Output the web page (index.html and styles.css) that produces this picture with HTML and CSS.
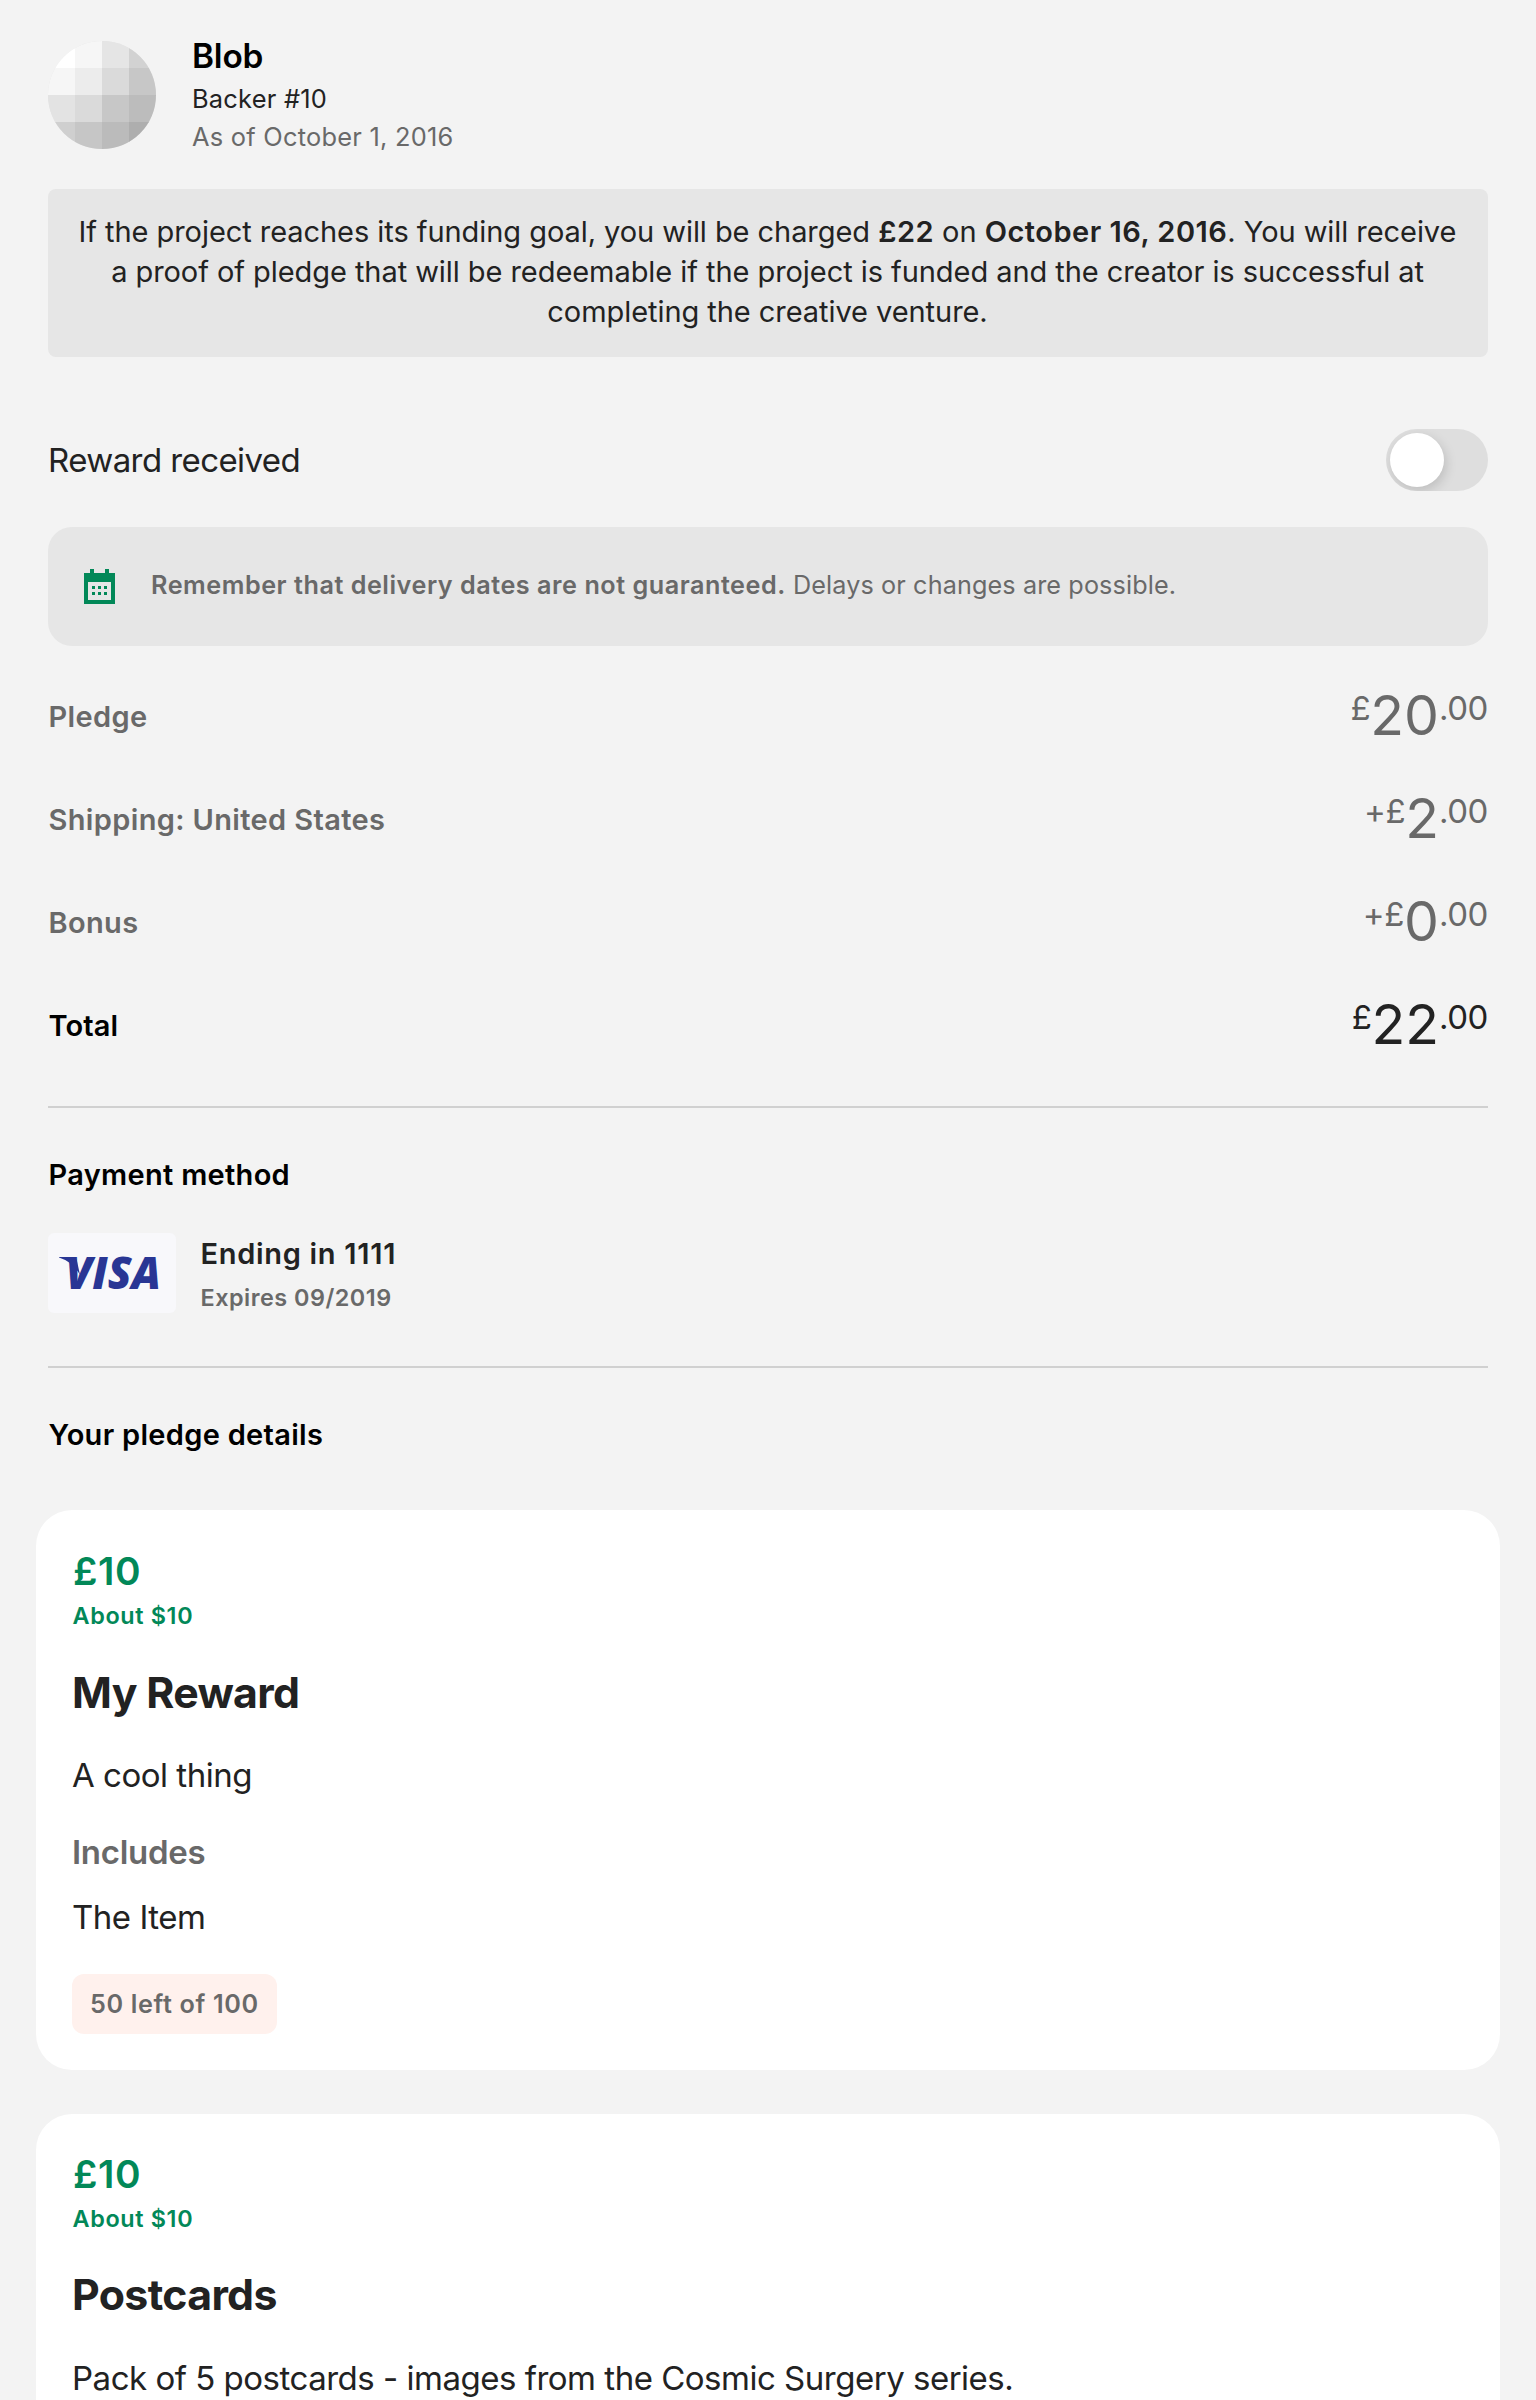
FILE: index.html
```html
<!DOCTYPE html>
<html lang="en">
<head>
<meta charset="utf-8">
<title>Manage your pledge</title>
<link rel="stylesheet" href="styles.css">
</head>
<body>
<main class="page">
  <header class="backer">
    <svg class="avatar" viewBox="0 0 4 4" role="img" aria-label="Avatar">
      <rect width="4" height="4" fill="#e4e4e4"/>
      <rect width="1.03" height="1.03" fill="#ffffff"/><rect x="1" width="1.03" height="1.03" fill="#f6f6f6"/><rect x="2" width="1.03" height="1.03" fill="#e5e5e5"/><rect x="3" width="1" height="1.03" fill="#d2d2d2"/>
      <rect y="1" width="1.03" height="1.03" fill="#f6f6f6"/><rect x="1" y="1" width="1.03" height="1.03" fill="#ececec"/><rect x="2" y="1" width="1.03" height="1.03" fill="#dadada"/><rect x="3" y="1" width="1" height="1.03" fill="#c7c7c7"/>
      <rect y="2" width="1.03" height="1.03" fill="#e3e3e3"/><rect x="1" y="2" width="1.03" height="1.03" fill="#dadada"/><rect x="2" y="2" width="1.03" height="1.03" fill="#c7c7c7"/><rect x="3" y="2" width="1" height="1.03" fill="#bcbcbc"/>
      <rect y="3" width="1.03" height="1" fill="#cfcfcf"/><rect x="1" y="3" width="1.03" height="1" fill="#c6c6c6"/><rect x="2" y="3" width="1.03" height="1" fill="#bbbbbb"/><rect x="3" y="3" width="1" height="1" fill="#aeaeae"/>
    </svg>
    <div>
      <h1 class="backer-name">Blob</h1>
      <p class="backer-line">Backer #10</p>
      <p class="backer-line backer-date">As of October 1, 2016</p>
    </div>
  </header>

  <p class="notice">If the project reaches its funding goal, you will be charged <b>£22</b> on <b>October 16, 2016</b>. You will receive a proof of pledge that will be redeemable if the project is funded and the creator is successful at completing the creative venture.</p>

  <div class="received">
    <span>Reward received</span>
    <span class="toggle" role="switch" aria-checked="false"><span class="knob"></span></span>
  </div>

  <div class="reminder">
    <svg class="calendar" viewBox="0 0 31 35" aria-hidden="true">
      <path fill="#028858" fill-rule="evenodd" d="M6 0h4v4h11V0h4v4h6v31H0V4h6zM4 13v18h23V13z"/>
      <path fill="#028858" d="M8 17h3v3H8zM14 17h3v3h-3zM20 17h3v3h-3zM8 23h3v3H8zM14 23h3v3h-3zM20 23h3v3h-3z"/>
    </svg>
    <p><b>Remember that delivery dates are not guaranteed.</b> Delays or changes are possible.</p>
  </div>

  <dl class="summary">
    <div class="row"><dt>Pledge</dt><dd><span class="small">£</span>20<span class="small">.00</span></dd></div>
    <div class="row"><dt>Shipping: United States</dt><dd><span class="small">+£</span>2<span class="small">.00</span></dd></div>
    <div class="row"><dt>Bonus</dt><dd><span class="small">+£</span>0<span class="small">.00</span></dd></div>
    <div class="row total"><dt>Total</dt><dd><span class="small">£</span>22<span class="small">.00</span></dd></div>
  </dl>

  <section class="section payment">
    <h2 class="heading">Payment method</h2>
    <div class="method">
      <svg class="visa" viewBox="0 0 128 80" role="img" aria-label="Visa">
        <rect width="128" height="80" rx="6" fill="#f8f8fb"/>
        <text class="visa-word" x="17.5" y="55.5" textLength="95.5" lengthAdjust="spacingAndGlyphs">VISA</text>
        <path fill="#293694" d="M11 24h13q4 0 5 4l3 14Q25 29 11 24.6z"/>
      </svg>
      <div class="method-text">
        <p class="ending">Ending in 1111</p>
        <p class="expires">Expires 09/2019</p>
      </div>
    </div>
  </section>

  <section class="section">
    <h2 class="heading">Your pledge details</h2>
    <div class="cards">
      <article class="card">
        <p class="price">£10</p>
        <p class="about">About $10</p>
        <h3 class="title">My Reward</h3>
        <p class="text">A cool thing</p>
        <h4 class="includes">Includes</h4>
        <p class="text item">The Item</p>
        <span class="badge">50 left of 100</span>
      </article>
      <article class="card card-long">
        <p class="price">£10</p>
        <p class="about">About $10</p>
        <h3 class="title">Postcards</h3>
        <p class="text">Pack of 5 postcards - images from the Cosmic Surgery series.</p>
      </article>
    </div>
  </section>
</main>
</body>
</html>
```
FILE: styles.css
```css
* {
  box-sizing: border-box;
  margin: 0;
}

body {
  height: 2400px;
  overflow: hidden;
  background: #f3f3f3;
  color: #222;
  font-family: Inter, "Liberation Sans", sans-serif;
}

b {
  font-weight: 600;
}

.page {
  padding: 34px 48px 0;
}

.backer {
  display: flex;
  gap: 36px;
}

.avatar {
  width: 108px;
  height: 108px;
  margin-top: 7px;
  border-radius: 50%;
}

.backer-name {
  margin-bottom: 2px;
  color: #000;
  font-size: 33.4px;
  font-weight: 600;
  line-height: 44px;
  letter-spacing: -0.16px;
}

.backer-line {
  font-size: 25.4px;
  line-height: 38px;
  letter-spacing: 0.24px;
}

.backer-date {
  color: #696969;
}

.notice {
  height: 168px;
  margin-top: 33px;
  padding: 23px 25px 23px 24px;
  border-radius: 8px;
  background: #e6e6e6;
  font-size: 29px;
  line-height: 40px;
  letter-spacing: -0.06px;
  text-align: center;
}

.notice b {
  letter-spacing: 0.5px;
}

.received {
  display: flex;
  justify-content: space-between;
  margin-top: 72px;
  font-size: 33px;
  line-height: 62px;
  letter-spacing: -0.58px;
}

.toggle {
  width: 102px;
  height: 62px;
  padding: 4px;
  border-radius: 31px;
  background: #dedede;
  overflow: hidden;
}

.knob {
  display: block;
  width: 54px;
  height: 54px;
  border-radius: 50%;
  background: #fff;
  box-shadow: 2px 4px 12px rgba(0, 0, 0, 0.15);
}

.reminder {
  display: flex;
  align-items: center;
  gap: 36px;
  height: 119px;
  margin-top: 36px;
  padding: 0 36px 3px;
  border-radius: 24px;
  background: #e6e6e6;
  color: #696969;
  font-size: 25.2px;
  letter-spacing: 0.12px;
}

.reminder b {
  letter-spacing: 0.53px;
}

.calendar {
  width: 31px;
  height: 35px;
  margin-top: 3px;
}

.summary {
  margin-top: 19px;
  color: #696969;
}

.row {
  display: flex;
  justify-content: space-between;
  align-items: flex-start;
  height: 103px;
}

.row dt {
  padding-left: 0.5px;
  font-size: 29px;
  font-weight: 600;
  line-height: 103px;
  letter-spacing: 0.36px;
}

.row dd {
  font-size: 55.4px;
  line-height: 99px;
  letter-spacing: -0.1px;
}

.small {
  font-size: 33px;
  line-height: 0;
  letter-spacing: -0.4px;
  vertical-align: 15px;
}

.total {
  color: #222;
}

.total dt {
  color: #000;
  letter-spacing: 0.1px;
}

.section {
  border-top: 2px solid #d0d0d0;
}

.payment {
  height: 260px;
  margin-top: 29px;
}

.heading {
  padding: 47px 0 0 0.5px;
  color: #000;
  font-size: 29px;
  font-weight: 600;
  line-height: 40px;
  letter-spacing: 0.3px;
}

.method {
  display: flex;
  gap: 24px;
  margin-top: 38px;
}

.method-text {
  padding: 1px 0 0 0.5px;
}

.visa {
  width: 128px;
  height: 80px;
}

.visa-word {
  fill: #293694;
  font: italic 800 44px "Open Sans", sans-serif;
}

.ending {
  font-size: 29px;
  font-weight: 600;
  line-height: 40px;
  letter-spacing: 0.7px;
}

.expires {
  color: #696969;
  font-size: 23.4px;
  font-weight: 600;
  line-height: 47px;
  letter-spacing: 0.5px;
}

.cards {
  display: grid;
  gap: 44px;
  margin: 55px -12px 0;
}

.card {
  padding: 36px 36px 35.5px;
  border-radius: 36px;
  background: #fff;
}

.card-long {
  min-height: 400px;
  padding-top: 35.4px;
}

.price {
  padding-left: 1px;
  color: #028858;
  font-size: 38.8px;
  font-weight: 600;
  line-height: 49px;
  letter-spacing: 0.59px;
}

.about {
  padding-left: 0.5px;
  color: #028858;
  font-size: 23.4px;
  font-weight: 600;
  line-height: 42px;
  letter-spacing: 0.65px;
}

.title {
  margin-top: 27.5px;
  font-size: 42.8px;
  font-weight: 700;
  line-height: 56px;
  letter-spacing: -0.65px;
}

.text {
  margin-top: 32.5px;
  font-size: 33px;
  line-height: 44px;
  letter-spacing: -0.49px;
}

.includes {
  margin-top: 33px;
  color: #696969;
  font-size: 33px;
  font-weight: 600;
  line-height: 44px;
  letter-spacing: -0.28px;
}

.item {
  margin-top: 21px;
}

.badge {
  display: block;
  width: fit-content;
  height: 60px;
  margin-top: 35px;
  padding: 0 18px;
  border-radius: 12px;
  background: #fff1ed;
  color: #696969;
  font-size: 25.2px;
  font-weight: 600;
  line-height: 60px;
  letter-spacing: 0.65px;
}
```
